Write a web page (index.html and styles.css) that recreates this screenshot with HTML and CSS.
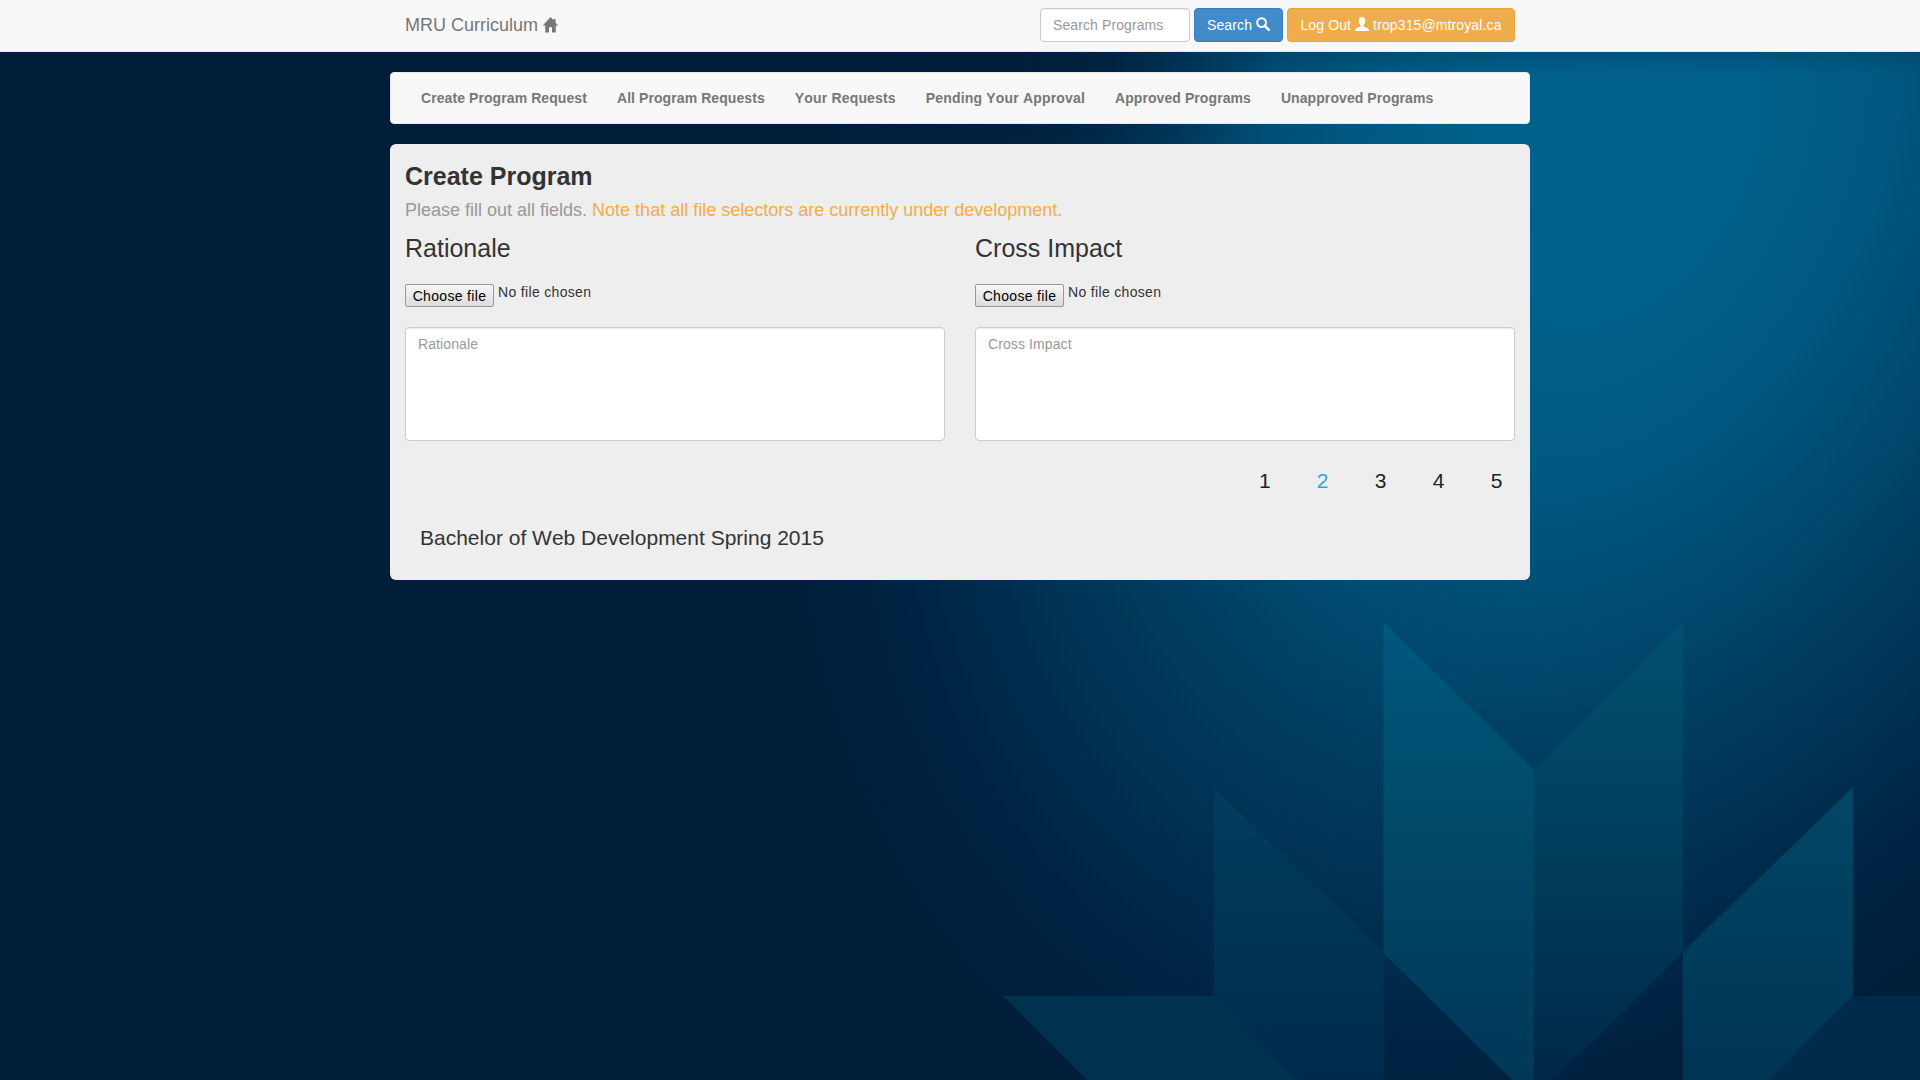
FILE: index.html
```html
<!DOCTYPE html>
<html lang="en">
<head>
<meta charset="utf-8">
<title>MRU Curriculum</title>
<link rel="stylesheet" href="styles.css">
</head>
<body>
<svg class="backdrop" viewBox="0 0 1920 1080" preserveAspectRatio="none" aria-hidden="true">
  <defs>
    <radialGradient id="halo" gradientUnits="userSpaceOnUse" cx="0" cy="0" r="1" gradientTransform="translate(1615 145) rotate(26) scale(770 1090)">
      <stop offset="0" stop-color="#00618c"/>
      <stop offset=".16" stop-color="#00608b"/>
      <stop offset=".33" stop-color="#005880"/>
      <stop offset=".48" stop-color="#004a70"/>
      <stop offset=".66" stop-color="#00385a"/>
      <stop offset=".84" stop-color="#002646"/>
      <stop offset="1" stop-color="#001d39"/>
    </radialGradient>
    <radialGradient id="shade" gradientUnits="userSpaceOnUse" cx="0" cy="0" r="1" gradientTransform="translate(990 60) scale(290 200)">
      <stop offset="0" stop-color="#001d39"/>
      <stop offset=".4" stop-color="#001d39" stop-opacity=".75"/>
      <stop offset="1" stop-color="#001d39" stop-opacity="0"/>
    </radialGradient>
    <linearGradient id="top" x1="0" y1="0" x2="0" y2="1"><stop offset="0" stop-color="#003a5c" stop-opacity=".35"/><stop offset="1" stop-color="#003a5c" stop-opacity="0"/></linearGradient>
    <linearGradient id="p1" gradientUnits="userSpaceOnUse" x1="0" y1="622" x2="0" y2="1080"><stop offset="0" stop-color="#00597f"/><stop offset=".5" stop-color="#004766"/><stop offset="1" stop-color="#003757"/></linearGradient>
    <linearGradient id="p2" gradientUnits="userSpaceOnUse" x1="0" y1="622" x2="0" y2="1080"><stop offset="0" stop-color="#005070"/><stop offset=".5" stop-color="#003e5c"/><stop offset="1" stop-color="#002747"/></linearGradient>
    <linearGradient id="p3" gradientUnits="userSpaceOnUse" x1="0" y1="787" x2="0" y2="1080"><stop offset="0" stop-color="#003e5d"/><stop offset="1" stop-color="#002a4b"/></linearGradient>
    <linearGradient id="p4" gradientUnits="userSpaceOnUse" x1="0" y1="787" x2="0" y2="1080"><stop offset="0" stop-color="#004766"/><stop offset="1" stop-color="#003453"/></linearGradient>
  </defs>
  <rect width="1920" height="1080" fill="url(#halo)"/>
  <rect x="700" width="600" height="300" fill="url(#shade)"/>
  <rect x="1200" y="52" width="720" height="22" fill="url(#top)"/>
  <path fill="url(#p3)" d="M1214 787L1384 953V1080H1298L1214 996z"/>
  <path fill="#003250" d="M1003 996H1214L1298 1080H1087z"/>
  <path fill="url(#p1)" d="M1383.500 622L1534 770V1080H1512L1383.500 953z"/>
  <path fill="url(#p2)" d="M1683 622V952L1555 1080H1534V770z"/>
  <path fill="url(#p4)" d="M1853 787V996L1769 1080H1683V952z"/>
  <path fill="#002a4a" d="M1853 996H1920V1080H1769z"/>
</svg>
<header class="topbar">
  <div class="container topbar-inner">
    <a class="brand">MRU Curriculum
      <svg class="icon-home" viewBox="0 0 18 18"><path d="M8.500 1L.8 9.500h2.400V16.500h3.800v-5.300h3v5.300h3.800V9.500h2.400L13.500 6.500V3h-2v1.300z"/></svg></a>
    <form class="search">
      <input class="control search-box" type="text" placeholder="Search Programs">
      <button class="btn btn-primary" type="button">Search
        <svg class="icon" viewBox="0 0 14 14"><circle cx="5.600" cy="5.600" r="4.400" fill="none" stroke="currentColor" stroke-width="2"/><path d="M8.800 8.800l4 4" stroke="currentColor" stroke-width="2.600" stroke-linecap="round"/></svg></button>
      <button class="btn btn-warning" type="button">Log Out
        <svg class="icon" viewBox="0 0 14 14"><path d="M7 0C4.800 0 3.700 1.600 3.800 3.700c.1 1.900.8 3.600 1.700 4.500.2.800-.1 1.300-.8 1.600L1.300 11.300Q0 12 0 14h14q0-2-1.300-2.700L9.300 9.800c-.7-.3-1-.8-.8-1.600.9-.9 1.600-2.600 1.700-4.500C10.300 1.600 9.200 0 7 0z"/></svg>
        trop315@mtroyal.ca</button>
    </form>
  </div>
</header>
<nav class="container menu">
  <a>Create Program Request</a>
  <a>All Program Requests</a>
  <a class="wide">Your Requests</a>
  <a class="wide">Pending Your Approval</a>
  <a>Approved Programs</a>
  <a>Unapproved Programs</a>
</nav>
<main class="container panel">
  <h1 class="title">Create Program</h1>
  <p class="lead">Please fill out all fields. <span class="note">Note that all file selectors are currently under development.</span></p>
  <div class="columns">
    <section>
      <h2 class="heading">Rationale</h2>
      <div class="file"><button class="file-btn" type="button">Choose file</button><span class="file-name">No file chosen</span></div>
      <textarea class="control area" placeholder="Rationale"></textarea>
    </section>
    <section>
      <h2 class="heading">Cross Impact</h2>
      <div class="file"><button class="file-btn" type="button">Choose file</button><span class="file-name">No file chosen</span></div>
      <textarea class="control area" placeholder="Cross Impact"></textarea>
    </section>
  </div>
  <div class="steps"><a>1</a><a class="current">2</a><a>3</a><a>4</a><a>5</a></div>
  <p class="program">Bachelor of Web Development Spring 2015</p>
</main>
</body>
</html>
```
FILE: styles.css
```css
* { box-sizing: border-box; }
body {
  margin: 0;
  min-height: 100vh;
  overflow: hidden;
  background: #001d39;
  font: 14px/20px "Liberation Sans", Arial, sans-serif;
  font-kerning: none;
  color: #333;
}
.backdrop { position: absolute; inset: 0; width: 100%; height: 100%; z-index: -1; }
.container { width: 1140px; margin: 0 auto; }
.topbar { height: 52px; background: #f8f8f8; border-bottom: 1px solid #e7e7e7; }
.topbar-inner { display: flex; justify-content: space-between; padding: 8px 15px; }
.brand { padding-top: 7px; font-size: 18px; color: #777; }
.icon-home { width: 18px; height: 18px; fill: currentColor; vertical-align: -3px; margin-left: -1px; }
.search { display: flex; gap: 4px; }
.control {
  display: block;
  font: inherit;
  font-kerning: none;
  letter-spacing: .1px;
  padding: 6px 12px;
  border: 1px solid #ccc;
  border-radius: 4px;
  background: #fff;
  box-shadow: inset 0 1px 1px rgba(0, 0, 0, .075);
  resize: none;
}
.control::placeholder { color: #999; opacity: 1; }
.search-box { width: 150px; height: 34px; }
.btn {
  height: 34px;
  padding: 0;
  border: 1px solid;
  border-radius: 4px;
  font: inherit;
  font-kerning: none;
  letter-spacing: .12px;
  color: #fff;
  white-space: nowrap;
}
.btn-primary { width: 89px; background: #428bca; border-color: #357ebd; }
.btn-warning { width: 228px; background: #f0ad4e; border-color: #eea236; }
.icon { width: 14px; height: 14px; fill: currentColor; vertical-align: -1px; }
.menu {
  display: flex;
  height: 52px;
  margin-top: 20px;
  padding: 15px;
  background: #f8f8f8;
  border: 1px solid #e7e7e7;
  border-radius: 4px;
  font-weight: bold;
  color: #777;
  letter-spacing: .08px;
}
.menu a { padding: 0 15px; }
.menu .wide { letter-spacing: .17px; }
.panel {
  height: 436px;
  margin-top: 20px;
  padding: 18px 15px;
  background: #eee;
  border-radius: 6px;
}
.title { margin: 0; font-size: 25px; line-height: 28px; }
.lead { margin: 8px 0 0; font-size: 18px; line-height: 25px; color: #999; }
.note { color: #f0ad4e; }
.columns { display: grid; grid-template-columns: 1fr 1fr; gap: 30px; margin-top: 11px; }
.heading { margin: 0; font-size: 25px; font-weight: normal; line-height: 28px; }
.file { display: flex; gap: 4px; height: 43px; margin-top: 22px; letter-spacing: .33px; }
.file-btn {
  width: 89px;
  height: 23px;
  padding: 0;
  border: 1px solid #999;
  border-radius: 2px;
  background: linear-gradient(#f6f6f6, #dcdcdc);
  font: inherit;
  letter-spacing: inherit;
  color: #000;
}
.file-name { margin-top: -2px; }
.area { width: 100%; height: 114px; }
.steps { display: flex; justify-content: flex-end; gap: 46.300px; padding-right: 12.500px; margin-top: 25px; font-size: 21px; line-height: 30px; color: #222; }
.steps .current { color: #31a6e0; }
.program { margin: 27px 15px 0; font-size: 21px; line-height: 30px; }
```
